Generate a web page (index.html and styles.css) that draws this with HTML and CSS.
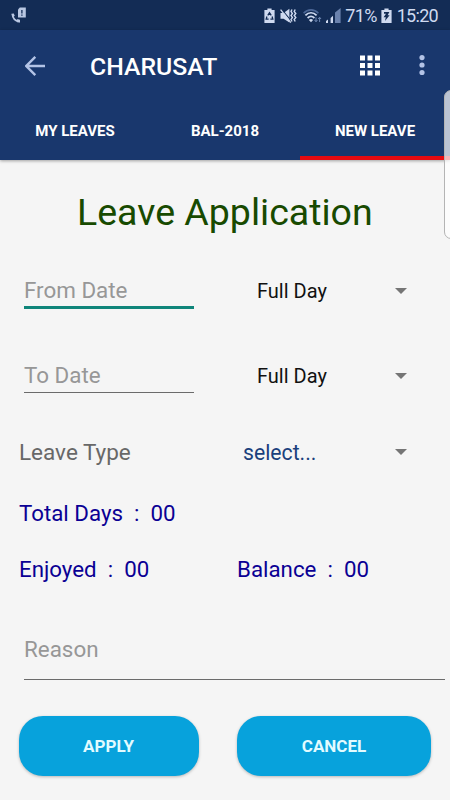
FILE: index.html
```html
<!DOCTYPE html>
<html lang="en">
<head>
    <meta charset="UTF-8">
    <meta name="viewport" content="width=device-width, initial-scale=1.0">
    <title>Leave Application</title>
    <link rel="stylesheet" href="styles.css">
</head>
<body>
    <div class="status-bar">
        <svg class="icon-call" width="15" height="16" viewBox="0 0 15 16">
            <path d="M1.6 7.2C1.6 11.3 4.4 14.3 8.6 14.3" fill="none" stroke="#b9c7e2" stroke-width="2"/>
            <path d="M0.4 6.8L2.8 6.4L3.8 9L1.4 9.8ZM6.2 12L9 12.8L9 15.4L6 15.2Z" fill="#b9c7e2"/>
            <path d="M8.8 0.5H14.8V10.4H7V2.6Z" fill="#b9c7e2"/>
            <path d="M10.9 3V6.6M10.9 7.6V8.8" stroke="#132c55" stroke-width="1.3"/>
        </svg>
        <div class="status-right">
            <svg class="icon-saver" width="11" height="16" viewBox="0 0 11 16">
                <path d="M3.4 0.4H7.6V2H10.6V15H0.4V2H3.4Z" fill="#cfdaf0"/>
                <path d="M3.8 7.4L5.5 4.8L7.2 7.4M8.1 8.5L8.8 11.2H6.4M4.6 11.2H2.2L2.9 8.5" fill="none" stroke="#132c55" stroke-width="1.3"/>
            </svg>
            <svg class="icon-mute" width="17" height="16" viewBox="0 0 17 16">
                <path d="M0.5 5H3.6L9.4 0.8V14.6L3.6 10.8H0.5Z" fill="#cfdaf0"/>
                <path d="M1.6 1L12 14" stroke="#132c55" stroke-width="1.2"/>
                <path d="M0.6 1.6L10.8 14.6" stroke="#cfdaf0" stroke-width="1.3"/>
                <path d="M12 1.5L11 3.5L12.4 5.5L11 7.5L12.4 9.5L11 11.5L12 13.5M15.2 1.5L14.2 3.5L15.8 5.5L14.2 7.5L15.8 9.5L14.2 11.5L15.2 13.5" fill="none" stroke="#cfdaf0" stroke-width="1.4"/>
            </svg>
            <svg class="icon-wifi" width="19" height="16" viewBox="0 0 19 16">
                <path d="M0.6 5.2C4.8 0.8 11.2 0.8 15.4 5.2" fill="none" stroke="#4c6797" stroke-width="1.6"/>
                <path d="M2.4 7.4C5.8 4 10.2 4 13.6 7.4M4.6 10C6.8 7.9 9.2 7.9 11.4 10" fill="none" stroke="#cfdaf0" stroke-width="1.8"/>
                <path d="M8 14.2L5.9 11.9C7.2 10.7 8.8 10.7 10.1 11.9Z" fill="#cfdaf0"/>
                <path d="M13 9.4V13.4M11.6 12L13 13.8L14.4 12M16.6 14V9.6M15.2 11L16.6 9.2L18 11" fill="none" stroke="#6d86b2" stroke-width="1"/>
            </svg>
            <svg class="icon-signal" width="15" height="15" viewBox="0 0 15 15">
                <path d="M0 15V13L2 11.6V15Z" fill="#cfdaf0"/>
                <path d="M4.6 15V10L7 7.8V15Z" fill="#cfdaf0"/>
                <path d="M9 15V4.6L14.6 0V15Z" fill="#6a82ad"/>
            </svg>
            <span class="status-text percent">71%</span>
            <svg class="icon-battery" width="11" height="16" viewBox="0 0 11 16">
                <path d="M3.4 0.4H7.6V2H10.6V15H0.4V2H3.4Z" fill="#cfdaf0"/>
                <path d="M3 4H8.4L6.6 7.2H8.6L4 13L4.8 9.2H2.6L5 5.8H3Z" fill="#132c55"/>
            </svg>
            <span class="status-text">15:20</span>
        </div>
    </div>

    <header>
        <div class="toolbar">
            <svg class="back" width="20" height="20" viewBox="0 0 20 20">
                <path d="M20 10H1.6M10.3 0.9L1.3 10L10.3 19.1" fill="none" stroke="#b3c3e6" stroke-width="2.4"/>
            </svg>
            <h1>CHARUSAT</h1>
            <svg class="grid" width="22" height="22" viewBox="0 0 22 22" fill="#ffffff">
                <rect x="1" y="0.5" width="5" height="5"/>
                <rect x="8.5" y="0.5" width="5" height="5"/>
                <rect x="16" y="0.5" width="5" height="5"/>
                <rect x="1" y="8" width="5" height="5"/>
                <rect x="8.5" y="8" width="5" height="5"/>
                <rect x="16" y="8" width="5" height="5"/>
                <rect x="1" y="15.5" width="5" height="5"/>
                <rect x="8.5" y="15.5" width="5" height="5"/>
                <rect x="16" y="15.5" width="5" height="5"/>
            </svg>
            <svg class="more" width="6" height="22" viewBox="0 0 6 22" fill="#b3c3e6">
                <circle cx="3" cy="2.6" r="2.6"/>
                <circle cx="3" cy="10" r="2.6"/>
                <circle cx="3" cy="17.5" r="2.6"/>
            </svg>
        </div>
        <nav class="tabs">
            <a class="tab">MY LEAVES</a>
            <a class="tab">BAL-2018</a>
            <a class="tab active">NEW LEAVE</a>
        </nav>
    </header>
    <div class="edge-panel"></div>

    <main>
        <h2>Leave Application</h2>

        <div class="row date-row">
            <div class="field focused">From Date</div>
            <div class="select"><span>Full Day</span><i class="arrow"></i></div>
        </div>
        <div class="row date-row">
            <div class="field">To Date</div>
            <div class="select"><span>Full Day</span><i class="arrow"></i></div>
        </div>
        <div class="row type-row">
            <div class="label">Leave Type</div>
            <div class="select type"><span>select...</span><i class="arrow"></i></div>
        </div>
        <div class="row total-row">
            <div class="info">Total Days  :  00</div>
        </div>
        <div class="row count-row">
            <div class="info">Enjoyed  :  00</div>
            <div class="info">Balance  :  00</div>
        </div>
        <div class="field reason">Reason</div>
        <div class="buttons">
            <button class="apply">APPLY</button>
            <button class="cancel">CANCEL</button>
        </div>
    </main>
</body>
</html>
```
FILE: styles.css
```css
html {
    overflow: hidden;
}

body {
    font-family: Roboto, "Liberation Sans", sans-serif;
    margin: 0;
    height: 800px;
    overflow: hidden;
    background-color: #f5f5f5;
}

.status-bar {
    display: flex;
    justify-content: space-between;
    height: 30px;
    padding: 0 12px 0 11px;
    background-color: #132c55;
}

.icon-call {
    margin-top: 7px;
}

.status-right {
    display: flex;
    align-items: center;
    height: 31px;
}

.icon-saver {
    margin-right: 5px;
}

.icon-mute {
    margin-right: 6px;
}

.icon-wifi {
    margin-right: 4px;
}

.icon-signal {
    margin-right: 4px;
}

.status-text {
    font-size: 18px;
    letter-spacing: -0.7px;
    color: #cfdaf0;
}

.percent {
    margin-right: 4px;
}

.icon-battery {
    margin-right: 5px;
}

header {
    height: 130px;
    background-color: #19376d;
    color: white;
    box-shadow: 0 1px 3px rgba(0, 0, 0, 0.35);
}

.toolbar {
    display: flex;
    align-items: center;
    height: 71px;
    padding: 0 25px;
}

.toolbar h1 {
    flex: 1;
    margin: 1px 0 0 45px;
    font-size: 24.8px;
    font-weight: 500;
}

.more {
    margin-left: 38px;
}

.tabs {
    display: flex;
    height: 59px;
}

.tab {
    flex: 1;
    box-sizing: border-box;
    padding-top: 1px;
    line-height: 58px;
    font-size: 15px;
    font-weight: 700;
    text-align: center;
}

.tab.active {
    border-bottom: 4px solid #e60a10;
}

/* handle of the side panel, sits over the header and the form */
.edge-panel {
    position: absolute;
    top: 90px;
    right: -8px;
    width: 12px;
    height: 147px;
    border: 1px solid #b4b4b4;
    border-radius: 8px;
    background-color: rgba(255, 255, 255, 0.7);
}

main {
    padding: 28px 0 0 19px;
}

h2 {
    margin: 0 0 21px 58px;
    font-size: 37.5px;
    font-weight: 400;
    line-height: 48px;
    color: #184a00;
}

.row {
    display: flex;
    align-items: center;
}

.date-row {
    height: 52px;
    margin-bottom: 33px;
    align-items: flex-start;
}

.field {
    box-sizing: border-box;
    width: 170px;
    height: 51px;
    margin-left: 5px;
    padding-top: 20px;
    border-bottom: 1px solid #6b6b6b;
    font-size: 22.4px;
    line-height: 26px;
    color: #979797;
}

.field.focused {
    height: 52px;
    border-bottom: 3px solid #0f857a;
}

.select {
    display: flex;
    align-items: center;
    width: 150px;
    height: 26px;
    margin: 21px 0 0 63px;
    font-size: 20px;
    color: #111111;
}

.select span {
    flex: 1;
}

.arrow {
    border-left: 6px solid transparent;
    border-right: 6px solid transparent;
    border-top: 6px solid #757575;
}

.type-row {
    height: 50px;
}

.label {
    width: 224px;
    font-size: 22.5px;
    color: #686868;
}

.select.type {
    width: 164px;
    margin: 0;
    font-size: 21.2px;
    color: #1a3f7c;
}

.total-row {
    height: 72px;
}

.info {
    width: 218px;
    font-size: 22.3px;
    white-space: pre;
    color: #0a0094;
    flex-shrink: 0;
}

.count-row {
    height: 40px;
}

.field.reason {
    width: 421px;
    height: 57px;
    margin-top: 34px;
    padding-top: 13px;
}

.buttons {
    display: flex;
    gap: 38px;
    margin-top: 36px;
}

.buttons button {
    height: 60px;
    border: none;
    border-radius: 24px;
    background-color: #07a2dc;
    color: #e2fbff;
    font-family: inherit;
    font-size: 17px;
    font-weight: 700;
    box-shadow: 0 1px 3px rgba(0, 0, 0, 0.25);
}

.buttons .apply {
    width: 180px;
    padding: 0 6px 0 5px;
}

.buttons .cancel {
    width: 194px;
}
```
